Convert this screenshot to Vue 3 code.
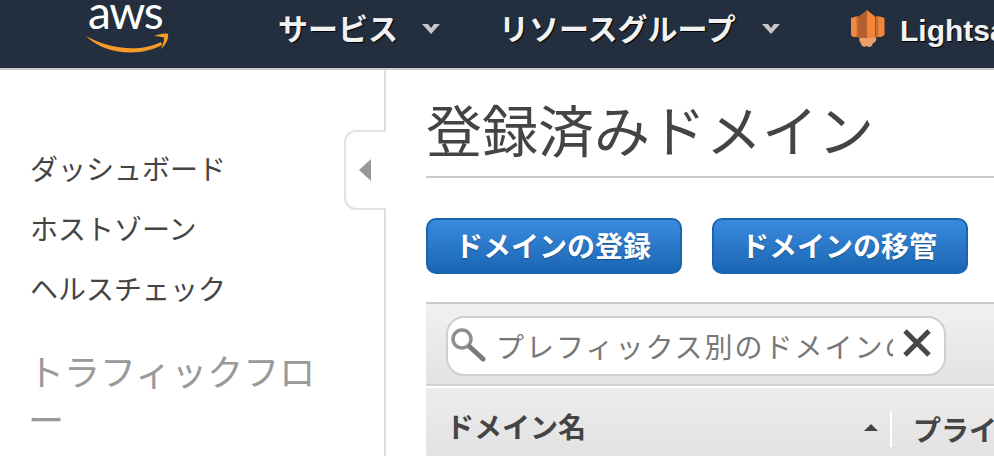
<template>
  <div class="page">
    <header class="topbar">
      <div class="logo">
        <span class="logo-text">aws</span>
        <svg class="smile" width="86" height="22" viewBox="0 0 86 22">
          <path d="M1 5C20 16 52 23 76 11L77 14C55 26 20 24 1 5Z" fill="#f79c2b" />
          <path d="M69 5C74 3 80 2 83 3C84 7 81 14 76 18C78 13 79.500 9 79 6.500C76 5.500 72 5.500 69 5Z" fill="#f79c2b" />
        </svg>
      </div>
      <nav class="menu">
        <a class="menu-item first">サービス<svg class="caret" width="18" height="10" viewBox="0 0 18 10"><path d="M0 0H6L9 4L12 0H18L9 10Z" /></svg></a>
        <a class="menu-item second">リソースグループ<svg class="caret" width="18" height="10" viewBox="0 0 18 10"><path d="M0 0H6L9 4L12 0H18L9 10Z" /></svg></a>
        <a class="menu-item service">
          <svg class="service-icon" width="35" height="38" viewBox="0 0 35 38">
            <path d="M10 27C12 26 24 26 26 27C27 30 25 33 23 33C22 37 19 38 17 36C14 38 11 36 11 33C9 32 9 29 10 27Z" fill="#e9a06c" />
            <path d="M1 8L6 6.500H9V27H3L1 25Z" fill="#f08a3c" />
            <path d="M26 6.500H30L34.500 8V25L31 27H26Z" fill="#f58536" />
            <path d="M6.500 6.500H8.500V27H6.500Z" fill="#c66f34" />
            <path d="M26 6.500H28.500V27H26Z" fill="#c66f34" />
            <path d="M8 7L17 0V28H8Z" fill="#b3602c" />
            <path d="M17 0L25.500 7V28H17Z" fill="#f58536" />
          </svg>
          Lightsail
        </a>
      </nav>
    </header>

    <div class="body">
      <aside class="sidebar">
        <ul class="side-links">
          <li>ダッシュボード</li>
          <li>ホストゾーン</li>
          <li>ヘルスチェック</li>
        </ul>
        <h3 class="side-title">トラフィックフロー</h3>
        <div class="collapse"><i></i></div>
      </aside>

      <main class="content">
        <h1 class="title">登録済みドメイン</h1>
        <div class="actions">
          <button class="btn">ドメインの登録</button>
          <button class="btn">ドメインの移管</button>
        </div>

        <div class="filter">
          <div class="search">
            <svg class="lens" width="36" height="36" viewBox="0 0 36 36">
              <circle cx="11" cy="11" r="9" fill="none" stroke="#8d8d8d" stroke-width="3.500" />
              <path d="M19 19L32 31" stroke="#7a7a7a" stroke-width="5" stroke-linecap="round" />
            </svg>
            <span class="placeholder">プレフィックス別のドメインの検索</span>
            <svg class="clear" width="28" height="28" viewBox="0 0 28 28">
              <path d="M2 2L26 26M26 2L2 26" stroke="#484848" stroke-width="5" />
            </svg>
          </div>
        </div>

        <div class="table-head">
          <div class="col name">ドメイン名<i class="sort"></i></div>
          <div class="col other">プライバシー保護</div>
        </div>
      </main>
    </div>
  </div>
</template>

<script setup>
</script>

<style>
html,
body {
  margin: 0;
  background: #fff;
  overflow: hidden;
}
</style>

<style scoped>
.page {
  width: 994px;
  height: 456px;
  overflow: hidden;
  font-family: "Liberation Sans", "Noto Sans CJK JP", sans-serif;
}

/* header */
.topbar {
  height: 68px;
  background: #232f3e;
  border-bottom: 2px solid #ccc;
  display: flex;
  align-items: center;
  overflow: hidden;
}
.logo {
  width: 278px;
  flex: none;
  height: 68px;
  box-sizing: border-box;
  padding-left: 85px;
}
.logo-text {
  display: block;
  margin-left: 3px;
  font-family: Lato, "Liberation Sans", sans-serif;
  font-size: 46px;
  line-height: 24px;
  color: #fff;
  letter-spacing: -1.5px;
}
.smile {
  display: block;
  margin-top: 7px;
}
.menu {
  display: flex;
  align-items: center;
  white-space: nowrap;
  padding-bottom: 14px;
}
.menu-item {
  display: flex;
  align-items: center;
  font-size: 30px;
  font-weight: 700;
  color: #f2f2f2;
  text-shadow: 1px 1px 1px #000;
}
.menu-item.first {
  width: 221px;
}
.menu-item.second {
  width: 351px;
}
.menu-item.second .caret {
  margin-left: 26px;
}
.caret {
  margin-left: 24px;
  margin-top: 4px;
  fill: #c8c8c8;
  filter: blur(0.4px);
}
.service-icon {
  margin-right: 15px;
  margin-top: -4px;
  filter: blur(0.7px);
}
.service {
  margin-top: 8px;
}

/* sidebar */
.body {
  display: flex;
  height: 386px;
}
.sidebar {
  width: 384px;
  flex: none;
  border-right: 2px solid #ddd;
  position: relative;
  padding-top: 71px;
}
.side-links {
  list-style: none;
  margin: 0;
  padding: 0 0 0 30px;
}
.side-links li {
  font-size: 28px;
  line-height: 60px;
  color: #444;
}
.side-title {
  margin: 0;
  padding: 29px 60px 0 28px;
  font-size: 36px;
  line-height: 48px;
  font-weight: 400;
  color: #999;
}
.collapse {
  position: absolute;
  top: 60px;
  right: -2px;
  width: 42px;
  height: 80px;
  box-sizing: border-box;
  background: #fff;
  border: 2px solid #e2e2e2;
  border-right: none;
  border-radius: 12px 0 0 12px;
  display: flex;
  align-items: center;
  padding-left: 13px;
}
.collapse i {
  width: 0;
  height: 0;
  border-top: 11px solid transparent;
  border-bottom: 11px solid transparent;
  border-right: 12px solid #999;
}

/* main */
.content {
  flex: 1;
  min-width: 0;
  padding-left: 40px;
}
.title {
  margin: 0;
  height: 108px;
  box-sizing: border-box;
  border-bottom: 2px solid #ccc;
  font-size: 56px;
  line-height: 80px;
  padding-top: 23px;
  font-weight: 400;
  color: #444;
  white-space: nowrap;
}
.actions {
  display: flex;
  gap: 30px;
  margin-top: 40px;
}
.btn {
  width: 256px;
  height: 56px;
  box-sizing: border-box;
  padding: 0 2px 3px 0;
  border: 2px solid #1a63ad;
  border-radius: 10px;
  background: linear-gradient(#3b8ade, #1a66b3);
  color: #fff;
  font: 700 28px "Liberation Sans", "Noto Sans CJK JP", sans-serif;
  text-shadow: 0 1px 1px rgba(0, 0, 0, 0.3);
}
.filter {
  margin-top: 28px;
  height: 84px;
  box-sizing: border-box;
  border-top: 2px solid #ccc;
  border-bottom: 2px solid #d4d4d4;
  background: linear-gradient(#f1f1f1, #e2e2e2);
  padding: 12px 0 0 20px;
}
.search {
  width: 500px;
  height: 60px;
  box-sizing: border-box;
  background: #fff;
  border: 2px solid #cfcfcf;
  border-radius: 18px;
  display: flex;
  align-items: center;
  padding-left: 3px;
  position: relative;
}
.lens {
  flex: none;
  margin-right: 9px;
  filter: blur(0.6px);
}
.placeholder {
  width: 397px;
  overflow: hidden;
  font-size: 28px;
  letter-spacing: 2px;
  color: #777;
  white-space: nowrap;
  flex: none;
}
.clear {
  position: absolute;
  right: 13px;
  top: 11px;
  filter: blur(0.6px);
}
.table-head {
  margin-top: 2px;
  height: 68px;
  box-sizing: border-box;
  padding-top: 14px;
  background: linear-gradient(#ededed, #e2e2e2);
  display: flex;
  align-items: center;
  color: #444;
  font-size: 28px;
  font-weight: 700;
  white-space: nowrap;
}
.col.name {
  width: 466px;
  flex: none;
  box-sizing: border-box;
  padding-left: 20px;
  height: 36px;
  line-height: 36px;
  border-right: 2px solid #fff;
  position: relative;
}
.sort {
  position: absolute;
  right: 12px;
  top: 13px;
  width: 0;
  height: 0;
  border-left: 7px solid transparent;
  border-right: 7px solid transparent;
  border-bottom: 7px solid #444;
}
.col.other {
  padding-left: 21px;
}
</style>
